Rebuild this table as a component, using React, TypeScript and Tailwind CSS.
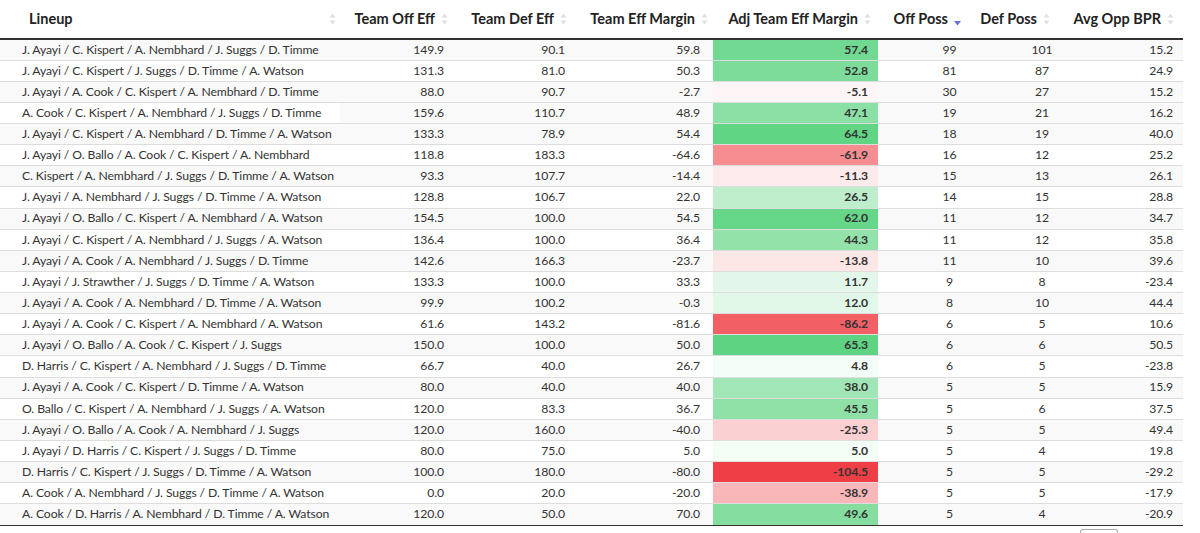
import React from "react";

type Row = [string, string, string, string, number, string, string, string];

const rows: Row[] = [
  ["J. Ayayi / C. Kispert / A. Nembhard / J. Suggs / D. Timme", "149.9", "90.1", "59.8", 57.4, "99", "101", "15.2"],
  ["J. Ayayi / C. Kispert / J. Suggs / D. Timme / A. Watson", "131.3", "81.0", "50.3", 52.8, "81", "87", "24.9"],
  ["J. Ayayi / A. Cook / C. Kispert / A. Nembhard / D. Timme", "88.0", "90.7", "-2.7", -5.1, "30", "27", "15.2"],
  ["A. Cook / C. Kispert / A. Nembhard / J. Suggs / D. Timme", "159.6", "110.7", "48.9", 47.1, "19", "21", "16.2"],
  ["J. Ayayi / C. Kispert / A. Nembhard / D. Timme / A. Watson", "133.3", "78.9", "54.4", 64.5, "18", "19", "40.0"],
  ["J. Ayayi / O. Ballo / A. Cook / C. Kispert / A. Nembhard", "118.8", "183.3", "-64.6", -61.9, "16", "12", "25.2"],
  ["C. Kispert / A. Nembhard / J. Suggs / D. Timme / A. Watson", "93.3", "107.7", "-14.4", -11.3, "15", "13", "26.1"],
  ["J. Ayayi / A. Nembhard / J. Suggs / D. Timme / A. Watson", "128.8", "106.7", "22.0", 26.5, "14", "15", "28.8"],
  ["J. Ayayi / O. Ballo / C. Kispert / A. Nembhard / A. Watson", "154.5", "100.0", "54.5", 62.0, "11", "12", "34.7"],
  ["J. Ayayi / C. Kispert / A. Nembhard / J. Suggs / A. Watson", "136.4", "100.0", "36.4", 44.3, "11", "12", "35.8"],
  ["J. Ayayi / A. Cook / A. Nembhard / J. Suggs / D. Timme", "142.6", "166.3", "-23.7", -13.8, "11", "10", "39.6"],
  ["J. Ayayi / J. Strawther / J. Suggs / D. Timme / A. Watson", "133.3", "100.0", "33.3", 11.7, "9", "8", "-23.4"],
  ["J. Ayayi / A. Cook / A. Nembhard / D. Timme / A. Watson", "99.9", "100.2", "-0.3", 12.0, "8", "10", "44.4"],
  ["J. Ayayi / A. Cook / C. Kispert / A. Nembhard / A. Watson", "61.6", "143.2", "-81.6", -86.2, "6", "5", "10.6"],
  ["J. Ayayi / O. Ballo / A. Cook / C. Kispert / J. Suggs", "150.0", "100.0", "50.0", 65.3, "6", "6", "50.5"],
  ["D. Harris / C. Kispert / A. Nembhard / J. Suggs / D. Timme", "66.7", "40.0", "26.7", 4.8, "6", "5", "-23.8"],
  ["J. Ayayi / A. Cook / C. Kispert / D. Timme / A. Watson", "80.0", "40.0", "40.0", 38.0, "5", "5", "15.9"],
  ["O. Ballo / C. Kispert / A. Nembhard / J. Suggs / A. Watson", "120.0", "83.3", "36.7", 45.5, "5", "6", "37.5"],
  ["J. Ayayi / O. Ballo / A. Cook / A. Nembhard / J. Suggs", "120.0", "160.0", "-40.0", -25.3, "5", "5", "49.4"],
  ["J. Ayayi / D. Harris / C. Kispert / J. Suggs / D. Timme", "80.0", "75.0", "5.0", 5.0, "5", "4", "19.8"],
  ["D. Harris / C. Kispert / J. Suggs / D. Timme / A. Watson", "100.0", "180.0", "-80.0", -104.5, "5", "5", "-29.2"],
  ["A. Cook / A. Nembhard / J. Suggs / D. Timme / A. Watson", "0.0", "20.0", "-20.0", -38.9, "5", "5", "-17.9"],
  ["A. Cook / D. Harris / A. Nembhard / D. Timme / A. Watson", "120.0", "50.0", "70.0", 49.6, "5", "4", "-20.9"],
];

function cellColor(v: number): string {
  if (v >= 0) {
    const t = Math.min(v / 65.3, 1);
    const r = Math.round(255 - t * (255 - 94));
    const g = Math.round(255 - t * (255 - 212));
    const b = Math.round(255 - t * (255 - 130));
    return `rgb(${r},${g},${b})`;
  }
  const t = Math.min(-v / 104.5, 1);
  const r = Math.round(255 - t * (255 - 239));
  const g = Math.round(255 - t * (255 - 62));
  const b = Math.round(255 - t * (255 - 69));
  return `rgb(${r},${g},${b})`;
}

function SortIcon({ active }: { active?: boolean }) {
  if (active) {
    return (
      <svg width="9" height="16" viewBox="0 0 9 16" className="shrink-0">
        <path d="M1 10 L8 10 L4.5 14.5 Z" fill="#6a72d8" />
      </svg>
    );
  }
  return (
    <svg width="9" height="16" viewBox="0 0 9 16" className="shrink-0">
      <path d="M1.5 6.5 L7.5 6.5 L4.5 2.5 Z" fill="#e0e0e0" />
      <path d="M1.5 9.5 L7.5 9.5 L4.5 13.5 Z" fill="#e0e0e0" />
    </svg>
  );
}

const headers: { label: string; cls: string; active?: boolean }[] = [
  { label: "Team Off Eff", cls: "pr-[6px]" },
  { label: "Team Def Eff", cls: "pr-[7px]" },
  { label: "Team Eff Margin", cls: "pr-[4px]" },
  { label: "Adj Team Eff Margin", cls: "pr-[6px]" },
  { label: "Off Poss", cls: "pr-[13px]", active: true },
  { label: "Def Poss", cls: "pr-[13px]" },
  { label: "Avg Opp BPR", cls: "pr-[8px]" },
];

export default function App() {
  return (
    <div
      className="w-[1200px] h-[533px] overflow-hidden bg-white text-[#333]"
      style={{ fontFamily: "Lato, 'Open Sans', sans-serif" }}
    >
      <table className="w-[1183px] table-fixed border-collapse">
        <colgroup>
          <col className="w-[340px]" />
          <col className="w-[115px]" />
          <col className="w-[120px]" />
          <col className="w-[138px]" />
          <col className="w-[165px]" />
          <col className="w-[97px]" />
          <col className="w-[89px]" />
          <col className="w-[119px]" />
        </colgroup>
        <thead>
          <tr className="h-[39px] border-b-2 border-[#333]">
            <th className="p-0 text-left">
              <div className="flex items-center justify-between pl-[29px] pr-[3px] text-[14.5px] font-bold text-[#222]">
                <span>Lineup</span>
                <SortIcon />
              </div>
            </th>
            {headers.map((h) => (
              <th key={h.label} className="p-0">
                <div
                  className={`flex items-center justify-end gap-[5px] text-[14.5px] font-bold text-[#222] whitespace-nowrap ${h.cls}`}
                >
                  <span>{h.label}</span>
                  <SortIcon active={h.active} />
                </div>
              </th>
            ))}
          </tr>
        </thead>
        <tbody className="text-[12.2px] tracking-[-0.1px]">
          {rows.map((r, i) => {
            const striped = i % 2 === 0;
            const rowBg = striped || i === 3 ? "bg-[#f9f9f9]" : "bg-white";
            const firstBg = i === 3 ? "bg-white" : "";
            return (
              <tr
                key={i}
                className={`h-[21.14px] ${rowBg} ${i > 0 ? "border-t border-[#ddd]" : ""}`}
              >
                <td className={`p-0 pl-[22px] whitespace-nowrap ${firstBg}`}>{r[0]}</td>
                <td className="p-0 pr-[11px] text-right">{r[1]}</td>
                <td className="p-0 pr-[10px] text-right">{r[2]}</td>
                <td className="p-0 pr-[13px] text-right">{r[3]}</td>
                <td
                  className="p-0 pr-[10px] text-right font-bold"
                  style={{ backgroundColor: cellColor(r[4]) }}
                >
                  {r[4].toFixed(1)}
                </td>
                <td className="p-0 pl-[50px] pr-[4px] text-center">{r[5]}</td>
                <td className="p-0 pl-[49px] pr-[4px] text-center">{r[6]}</td>
                <td className="p-0 pr-[10px] text-right">{r[7]}</td>
              </tr>
            );
          })}
        </tbody>
      </table>
      <div className="w-[1183px] border-t border-[#333]" />
      <div className="flex w-[1183px] justify-end pr-[65px] pt-[3px]">
        <div className="h-[12px] w-[38px] rounded-t-[3px] border border-b-0 border-[#aaa]" />
      </div>
    </div>
  );
}
